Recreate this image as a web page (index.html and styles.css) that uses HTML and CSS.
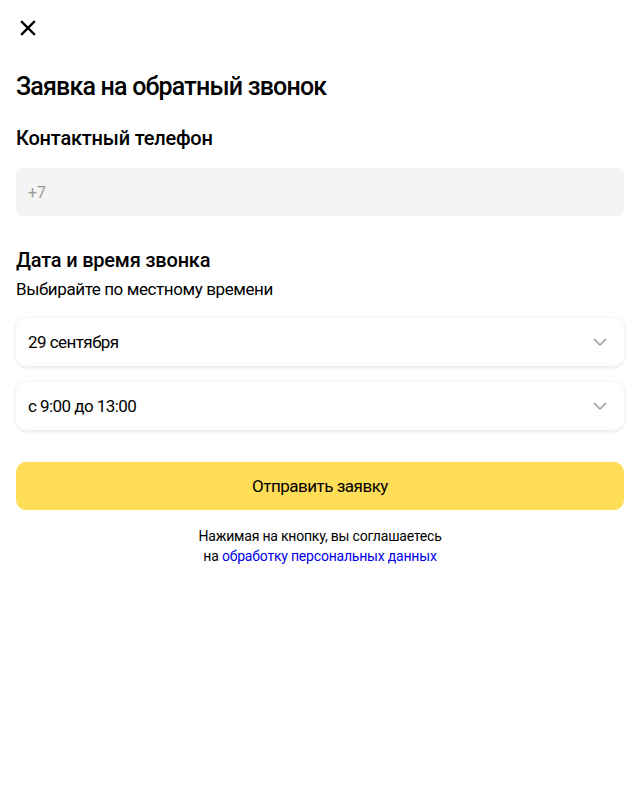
FILE: index.html
```html
<!DOCTYPE html>
<html lang="ru">
<head>
<meta charset="utf-8">
<link rel="stylesheet" href="styles.css">
</head>
<body>
<div class="page">
  <button class="close" aria-label="Закрыть">
    <svg width="16" height="16" viewBox="0 0 16 16"><path d="M2 2L14 14M14 2L2 14" stroke="#000" stroke-width="2.4" stroke-linecap="square"/></svg>
  </button>
  <h1 class="title">Заявка на обратный звонок</h1>
  <h2 class="section">Контактный телефон</h2>
  <div class="input">+7</div>
  <h2 class="section section-date">Дата и время звонка</h2>
  <p class="hint">Выбирайте по местному времени</p>
  <div class="select">
    <span>29 сентября</span>
    <svg width="14" height="8" viewBox="0 0 14 8"><path d="M1 1L7 7L13 1" fill="none" stroke="#a0a0a0" stroke-width="1.6"/></svg>
  </div>
  <div class="select">
    <span>с 9:00 до 13:00</span>
    <svg width="14" height="8" viewBox="0 0 14 8"><path d="M1 1L7 7L13 1" fill="none" stroke="#a0a0a0" stroke-width="1.6"/></svg>
  </div>
  <button class="submit">Отправить заявку</button>
  <p class="note">Нажимая на кнопку, вы соглашаетесь<br>на <a href="#">обработку персональных данных</a></p>
</div>
</body>
</html>
```
FILE: styles.css
```css
* { box-sizing: border-box; }
body {
  margin: 0;
  background: #fff;
  font-family: Roboto, "Noto Sans", sans-serif;
  color: #000;
}
.page {
  padding: 0 16px;
  display: flex;
  flex-direction: column;
}
.close {
  border: 0;
  background: none;
  padding: 0;
  margin: 20px 0 0 4px;
  width: 16px;
  height: 16px;
  display: flex;
}
.title {
  margin: 35px 0 0;
  font-size: 25px;
  font-weight: 500;
  line-height: 32px;
  letter-spacing: -0.8px;
}
.section {
  margin: 22px 0 0;
  font-size: 20px;
  font-weight: 500;
  line-height: 26px;
  letter-spacing: -0.2px;
}
.input {
  margin-top: 17px;
  height: 48px;
  border-radius: 8px;
  background: #f4f4f4;
  color: #999;
  font-size: 16px;
  display: flex;
  align-items: center;
  padding: 0 12px;
}
.section-date { margin-top: 31px; }
.hint {
  margin: 5px 0 0;
  font-size: 17px;
  line-height: 22px;
  letter-spacing: -0.4px;
}
.select {
  margin-top: 18px;
  height: 48px;
  border-radius: 10px;
  background: #fff;
  box-shadow: 0 1px 4px rgba(0,0,0,0.12);
  display: flex;
  align-items: center;
  justify-content: space-between;
  padding: 0 17px 0 12px;
  font-size: 17px;
  letter-spacing: -0.55px;
}
.select + .select { margin-top: 16px; }
.submit {
  margin-top: 32px;
  height: 48px;
  border: 0;
  border-radius: 10px;
  background: #ffdd57;
  font-family: inherit;
  font-size: 17px;
  letter-spacing: -0.5px;
  color: #000;
}
.note {
  margin: 16px 0 0;
  text-align: center;
  font-size: 14px;
  line-height: 20px;
  letter-spacing: -0.2px;
}
.note a { color: #0000ee; text-decoration: none; }
```
